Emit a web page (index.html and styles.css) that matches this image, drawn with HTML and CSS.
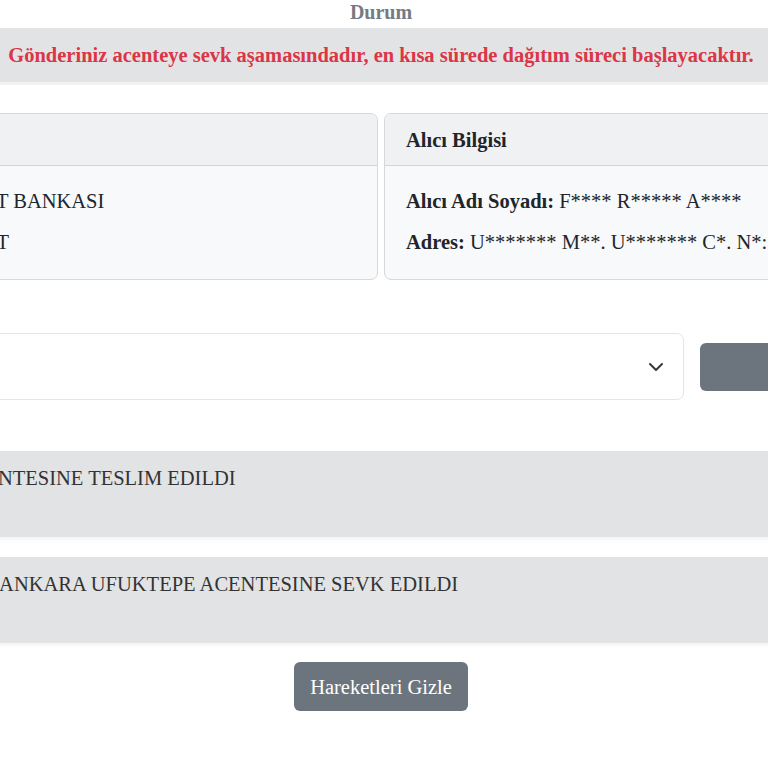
FILE: index.html
```html
<!DOCTYPE html>
<html lang="tr">
<head>
<meta charset="utf-8">
<title>Gönderi Takip</title>
<link rel="stylesheet" href="styles.css">
</head>
<body>
<div class="viewport">
  <main class="page">
    <h3 class="title">Durum</h3>
    <div class="alert">Gönderiniz acenteye sevk aşamasındadır, en kısa sürede dağıtım süreci başlayacaktır.</div>

    <section class="cards">
      <div class="card">
        <div class="card-header">Gönderici Bilgisi</div>
        <div class="card-body">
          <p><b>Gönderici Adı Soyadı:</b> T.C. ZİRAAT BANKASI</p>
          <p><b>Çıkış Birimi:</b> ANKARA YENİKENT</p>
        </div>
      </div>
      <div class="card">
        <div class="card-header">Alıcı Bilgisi</div>
        <div class="card-body">
          <p><b>Alıcı Adı Soyadı:</b> F**** R***** A****</p>
          <p><b>Adres:</b> U******* M**. U******* C*. N*: 1* D*: 3</p>
        </div>
      </div>
    </section>

    <section class="filter">
      <div class="select">
        <span class="select-value">Tüm Hareketler</span>
        <svg class="chevron" viewBox="0 0 16 16" width="16" height="16"><path d="M2 5l6 6 6-6" fill="none" stroke="#343a40" stroke-width="2" stroke-linecap="round" stroke-linejoin="round"/></svg>
      </div>
      <button class="btn btn-filter">Filtrele</button>
    </section>

    <section class="moves">
      <div class="move">KIRIKKALE MERKEZ ACENTESINE TESLIM EDILDI</div>
      <div class="move">KIRIKKALE MERKEZDEN ANKARA UFUKTEPE ACENTESINE SEVK EDILDI</div>
    </section>

    <div class="actions">
      <button class="btn btn-toggle">Hareketleri Gizle</button>
    </div>
  </main>
</div>
</body>
</html>
```
FILE: styles.css
```css
html, body {
  margin: 0;
  padding: 0;
  background: #fff;
  overflow: hidden;
}
body {
  font-family: "Liberation Serif", "Times New Roman", serif;
  font-size: 20.5px;
  line-height: 30px;
  color: #212529;
}
.viewport {
  display: flex;
  justify-content: center;
  width: 768px;
  height: 768px;
  overflow: hidden;
}
.page {
  flex: none;
  width: 1414px;
  margin-right: 6px;
}
.title {
  margin: 0;
  font-size: 20px;
  line-height: 24px;
  font-weight: bold;
  color: #777b80;
  text-align: center;
}
.alert {
  margin-top: 4px;
  padding: 12px;
  background: #e2e3e5;
  color: #dc3545;
  font-weight: bold;
  text-align: center;
  box-shadow: 0 3px 0 #f1f2f4;
}
.cards {
  margin-top: 31px;
  display: grid;
  grid-template-columns: 1fr 1fr;
  gap: 6px;
}
.card {
  border: 1px solid #d6d8db;
  border-radius: 7px;
  background: #f8f9fa;
  overflow: hidden;
}
.card-header {
  height: 51px;
  display: flex;
  align-items: center;
  padding: 0 21px;
  background: #f0f1f3;
  border-bottom: 1px solid #d3d5d8;
  font-weight: bold;
}
.card-body {
  padding: 20px 21px 22px;
  display: flex;
  flex-direction: column;
  gap: 11px;
}
.card-body p {
  margin: 0;
  white-space: nowrap;
}
.filter {
  margin-top: 53px;
  display: flex;
  align-items: center;
  gap: 16px;
}
.select {
  flex: none;
  width: 1010px;
  height: 67px;
  box-sizing: border-box;
  border: 1px solid #e3e5e8;
  border-radius: 7px;
  background: #fff;
  display: flex;
  align-items: center;
  justify-content: space-between;
  padding: 0 19px 0 24px;
  font-family: "Liberation Sans", Arial, sans-serif;
  font-size: 18px;
  color: #212529;
}
.chevron {
  width: 16px;
  height: 16px;
}
.btn {
  border: 0;
  border-radius: 6px;
  background: #6c757d;
  color: #fff;
  font-family: "Liberation Serif", "Times New Roman", serif;
  font-size: 20.5px;
  line-height: 30px;
  cursor: pointer;
}
.btn-filter {
  flex: 1;
  height: 48px;
}
.moves {
  margin-top: 51px;
  display: flex;
  flex-direction: column;
  gap: 20px;
}
.move {
  min-height: 86px;
  box-sizing: border-box;
  padding: 12px 16px 12px 78px;
  background: #e2e3e5;
  box-shadow: 0 3px 3px rgba(0, 0, 0, 0.04);
  white-space: nowrap;
  color: #333;
}
.actions {
  margin-top: 19px;
  display: flex;
  justify-content: center;
}
.btn-toggle {
  height: 49px;
  padding: 0 16px;
}
```
